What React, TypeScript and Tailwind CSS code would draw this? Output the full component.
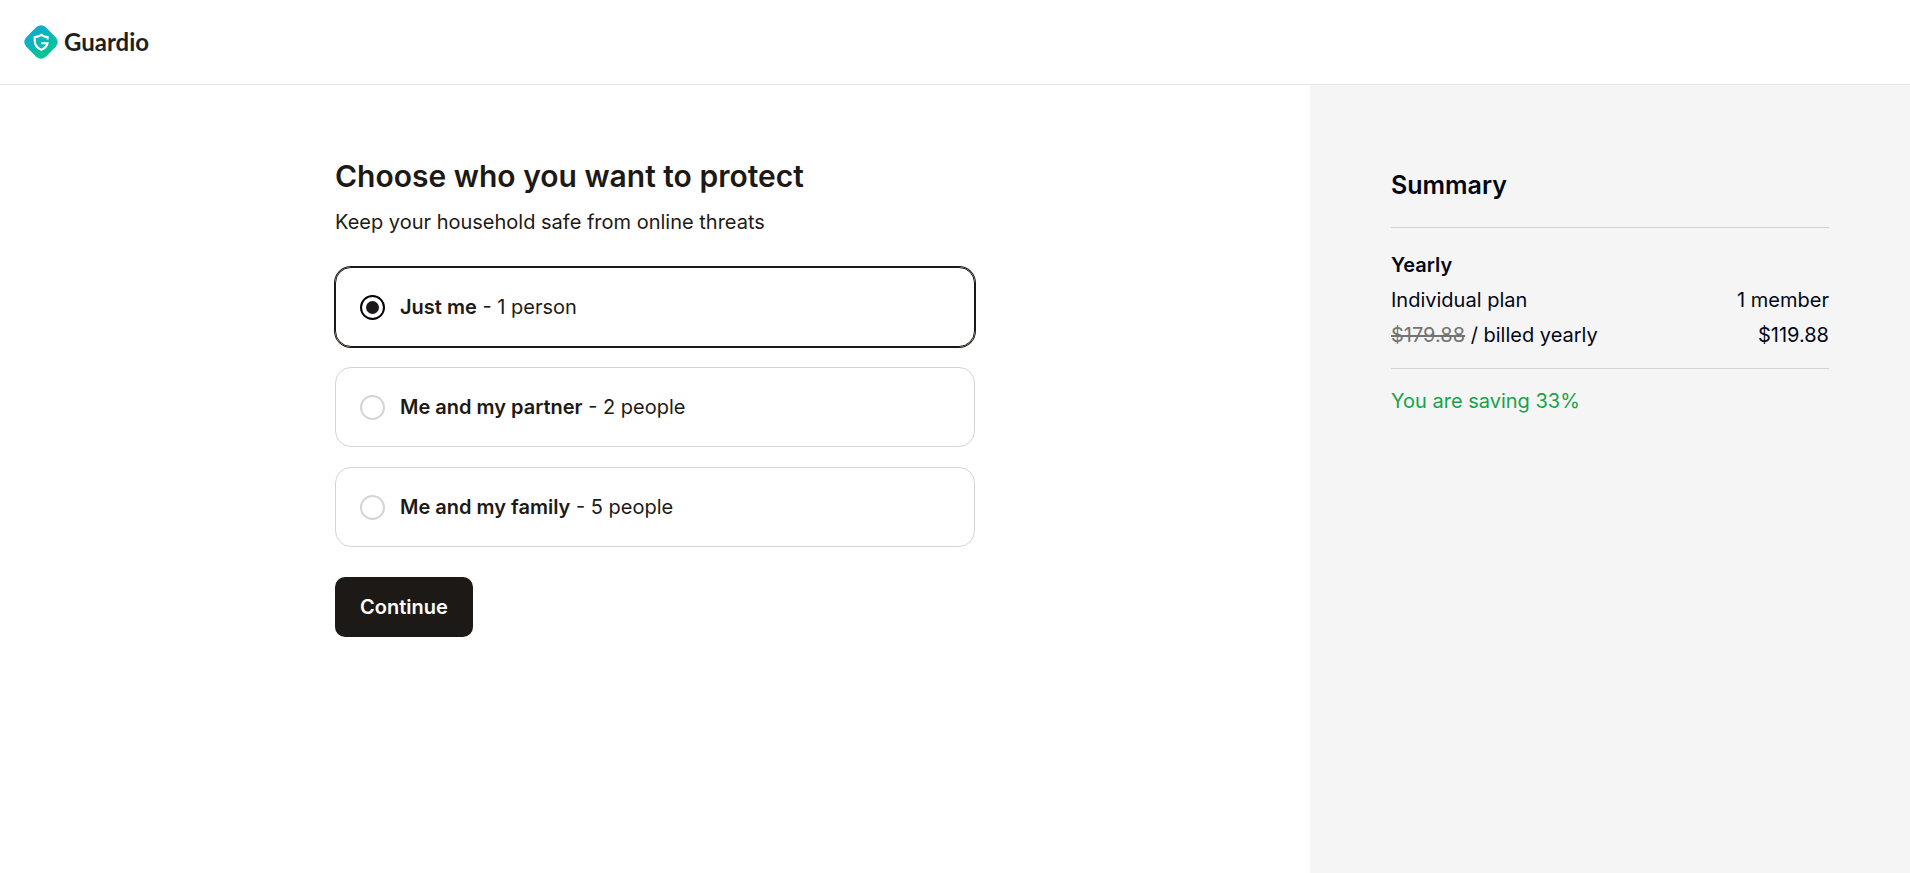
import React, { useState } from 'react';

interface Plan {
  id: string;
  name: string;
  people: string;
  summary: string;
  members: string;
}

const plans: Plan[] = [
  { id: 'individual', name: 'Just me', people: '1 person', summary: 'Individual plan', members: '1 member' },
  { id: 'partner', name: 'Me and my partner', people: '2 people', summary: 'Couple plan', members: '2 members' },
  { id: 'family', name: 'Me and my family', people: '5 people', summary: 'Family plan', members: '5 members' }
];

const Logo: React.FC = () => (
  <a href="#" className="flex items-center gap-1.5 text-[#1f1f1f]">
    <svg className="h-[34px] w-[34px]" viewBox="0 0 34 34" fill="none" aria-hidden="true">
      <defs>
        <linearGradient id="logo-fill" x1="8" y1="6" x2="22" y2="28" gradientUnits="userSpaceOnUse">
          <stop stopColor="#12aad2" />
          <stop offset="1" stopColor="#04c495" />
        </linearGradient>
      </defs>
      <path
        d="M12.4 2.1Q17 -1.5 21.6 2.1L31.9 12.4Q35.5 17 31.9 21.6L21.6 31.9Q17 35.5 12.4 31.9L2.1 21.6Q-1.5 17 2.1 12.4Z"
        fill="url(#logo-fill)"
      />
      <path
        d="M23.6 14.4V12.1Q20 11.9 17.3 9.9Q14.5 11.9 10.7 12.1V15.6C10.7 20 12.9 23 17.2 24.9C20.8 23.3 22.9 21.2 23.5 18.2H17.4"
        stroke="#fff"
        strokeWidth="2.1"
      />
    </svg>
    <span className="font-['Lato',sans-serif] text-2xl font-bold">Guardio</span>
  </a>
);

const App: React.FC = () => {
  const [selectedId, setSelectedId] = useState('individual');
  const selected = plans.find((plan) => plan.id === selectedId) ?? plans[0];

  return (
    <div className="flex min-h-screen flex-col bg-white font-['Inter',sans-serif] text-xl text-[#1d1916]">
      {/* Header */}
      <header className="flex h-[85px] items-center border-b border-[#e5e5e5] px-6">
        <Logo />
      </header>

      <div className="flex flex-1">
        {/* Plan selection */}
        <main className="flex-1 pt-[71px]">
          <form className="mx-auto max-w-[640px]" onSubmit={(e) => e.preventDefault()}>
            <h1 className="text-3xl leading-10 font-semibold">Choose who you want to protect</h1>
            <p className="mt-[11px] leading-[30px]">Keep your household safe from online threats</p>

            <div className="mt-[30px] flex flex-col gap-5" role="radiogroup" aria-label="Plan">
              {plans.map((plan) => (
                <label
                  key={plan.id}
                  htmlFor={plan.id}
                  className={`flex h-20 cursor-pointer items-center gap-[15px] rounded-2xl border px-6 ${
                    plan.id === selectedId ? 'border-[#1d1916] ring-1 ring-[#1d1916]' : 'border-[#d4d4d4]'
                  }`}
                >
                  <input
                    id={plan.id}
                    type="radio"
                    name="plan"
                    checked={plan.id === selectedId}
                    onChange={() => setSelectedId(plan.id)}
                    className="grid h-[25px] w-[25px] shrink-0 appearance-none place-items-center rounded-full border-2 border-[#d4d4d4] before:h-[13px] before:w-[13px] before:rounded-full checked:border-black checked:before:bg-[#1d1916]"
                  />
                  <span>
                    <span className="font-semibold">{plan.name}</span> - {plan.people}
                  </span>
                </label>
              ))}
            </div>

            <button type="submit" className="mt-[30px] h-[60px] rounded-[10px] bg-[#1d1916] px-[25px] font-semibold text-white">
              Continue
            </button>
          </form>
        </main>

        {/* Summary */}
        <aside className="w-[600px] bg-[#f5f5f5] px-[81px] pt-[83px] text-[#020617]">
          <h2 className="border-b border-[#d0d0d0] pb-[25px] text-[25px] leading-[34px] font-semibold">Summary</h2>
          <div className="flex flex-col gap-[5px] border-b border-[#d4d4d4] pt-[22px] pb-[18px] leading-[30px]">
            <p className="font-semibold">Yearly</p>
            <div className="flex justify-between">
              <span>{selected.summary}</span>
              <span>{selected.members}</span>
            </div>
            <div className="flex justify-between">
              <span>
                <s className="text-[#737373]">$179.88</s> / billed yearly
              </span>
              <span>$119.88</span>
            </div>
          </div>
          <p className="mt-[17px] leading-[30px] text-[#16a34a]">You are saving 33%</p>
        </aside>
      </div>
    </div>
  );
};

export default App;
